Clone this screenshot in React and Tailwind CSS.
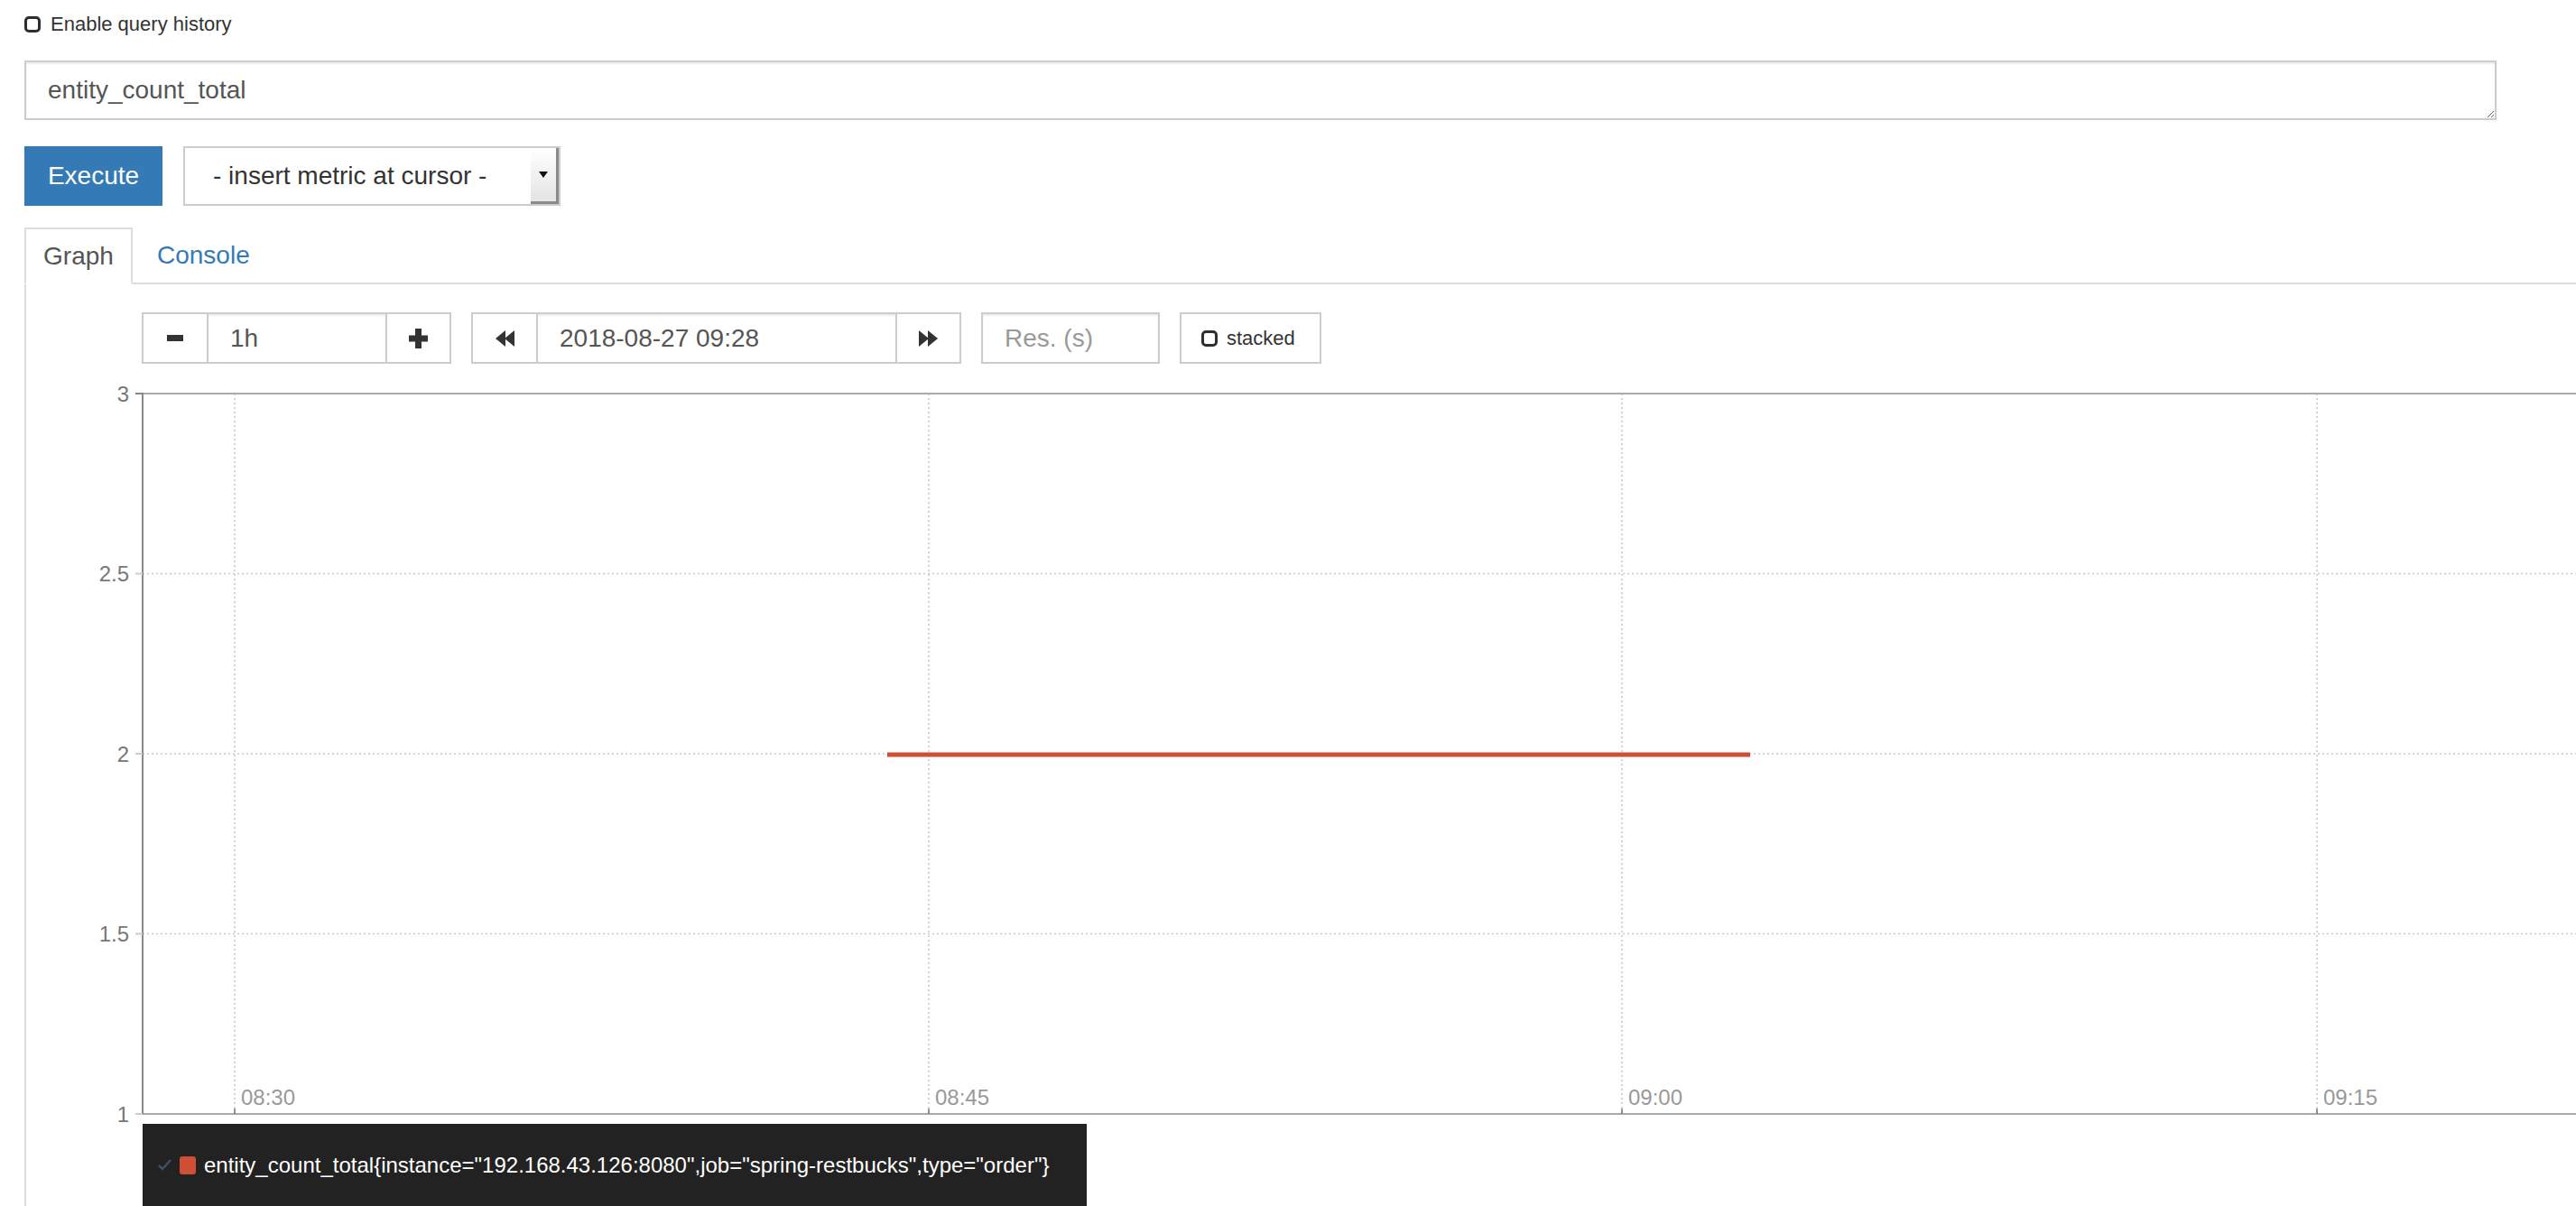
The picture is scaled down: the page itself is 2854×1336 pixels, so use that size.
import React from 'react';

const plotW = 2825;
const yOf = (v) => 16 + (3 - v) * 399;

const yTicks = [
  { v: 3, label: '3' },
  { v: 2.5, label: '2.5' },
  { v: 2, label: '2' },
  { v: 1.5, label: '1.5' },
  { v: 1, label: '1' },
];

const xTicks = [
  { x: 231, label: '08:30' },
  { x: 1000, label: '08:45' },
  { x: 1768, label: '09:00' },
  { x: 2538, label: '09:15' },
];

const Checkbox = ({ size = 18 }) => (
  <span
    className="inline-block shrink-0 rounded-[5px] border-[3px] border-[#2e2e2e] bg-white"
    style={{ width: size, height: size }}
  />
);

const MinusIcon = () => (
  <svg width="18" height="7" viewBox="0 0 18 7">
    <rect width="18" height="7" fill="#333" />
  </svg>
);

const PlusIcon = () => (
  <svg width="21" height="22" viewBox="0 0 21 22">
    <rect x="7" y="0" width="7" height="22" fill="#333" />
    <rect x="0" y="7.5" width="21" height="7" fill="#333" />
  </svg>
);

const BackwardIcon = () => (
  <svg width="21" height="18" viewBox="0 0 21 18">
    <polygon points="11,0 0,9 11,18" fill="#333" />
    <polygon points="21,0 10,9 21,18" fill="#333" />
  </svg>
);

const ForwardIcon = () => (
  <svg width="21" height="18" viewBox="0 0 21 18">
    <polygon points="0,0 11,9 0,18" fill="#333" />
    <polygon points="10,0 21,9 10,18" fill="#333" />
  </svg>
);

const Graph = () => (
  <svg width={plotW} height="832" className="mt-[17px] block">
    {/* grid */}
    {yTicks.slice(1, 4).map((t) => (
      <line key={t.v} x1="129" x2={plotW} y1={yOf(t.v)} y2={yOf(t.v)} stroke="#c8c8c8" strokeWidth="1.5" strokeDasharray="2 3" />
    ))}
    {xTicks.map((t) => (
      <line key={t.label} x1={t.x} x2={t.x} y1="16" y2="814" stroke="#c8c8c8" strokeWidth="1.5" strokeDasharray="2 3" />
    ))}
    <line x1="129" x2={plotW} y1="16" y2="16" stroke="#aaa" strokeWidth="2" />
    <line x1="129" x2={plotW} y1="814" y2="814" stroke="#aaa" strokeWidth="2" />
    <line x1="129" x2="129" y1="15" y2="815" stroke="#888" strokeWidth="2" />

    {/* y axis */}
    {yTicks.map((t) => (
      <g key={t.label}>
        <line x1="121" x2="129" y1={yOf(t.v)} y2={yOf(t.v)} stroke={t.v === 3 ? '#888' : '#ccc'} strokeWidth="2" />
        <text x="114" y={yOf(t.v) + 8.5} textAnchor="end" fontSize="24" fill="#777">
          {t.label}
        </text>
      </g>
    ))}

    {/* x axis */}
    {xTicks.map((t) => (
      <g key={t.label}>
        <line x1={t.x} x2={t.x} y1="808" y2="814" stroke="#777" strokeWidth="1.5" />
        <text x={t.x + 7} y="804" fontSize="24" fill="#999">
          {t.label}
        </text>
      </g>
    ))}

    {/* series */}
    <line x1="954" x2="1910" y1="416" y2="416" stroke="#cd4f36" strokeWidth="5" />
  </svg>
);

export default function App() {
  return (
    <div className="relative h-[1336px] w-[2854px] overflow-hidden bg-white font-['Liberation_Sans',Arial,sans-serif] text-[#333]">
      <div className="pl-[27px] pt-[18px]">
        {/* query history toggle */}
        <label className="flex h-[18px] items-center gap-[11px]">
          <Checkbox />
          <span className="text-[22px] leading-[26px]">Enable query history</span>
        </label>

        {/* expression */}
        <textarea
          rows={1}
          defaultValue="entity_count_total"
          className="mt-[31px] block h-[66px] w-[2739px] overflow-hidden border-2 border-[#ccc] pl-[24px] pt-[11px] text-[28px] leading-[40px] text-[#555] shadow-[inset_0_2px_2px_rgba(0,0,0,0.075)] outline-none"
        />

        <div className="mt-[29px] flex h-[66px] gap-[23px]">
          <button className="w-[153px] bg-[#337ab7] text-[28px] text-white">Execute</button>
          <div className="flex w-[418px] border-2 border-[#ccc] bg-white">
            <span className="flex flex-1 items-center pl-[31px] text-[28px] text-[#333]">- insert metric at cursor -</span>
            <span className="flex w-[31px] items-center justify-center border-b-[3px] border-r-[3px] border-b-[#8a8a8a] border-r-[#8a8a8a] bg-gradient-to-b from-white to-[#e4e4e4]">
              <svg width="10" height="7" viewBox="0 0 10 7">
                <polygon points="0,0 10,0 5,7" fill="#111" />
              </svg>
            </span>
          </div>
        </div>

        {/* tabs */}
        <div className="mt-[24px] flex border-b-2 border-[#ddd]">
          <div className="-mb-[2px] flex h-[63px] w-[120px] items-center justify-center border-2 border-[#ddd] border-b-white bg-white text-[28px] text-[#555]">
            Graph
          </div>
          <div className="ml-[4px] flex items-center px-[23px] text-[28px] text-[#337ab7]">Console</div>
        </div>

        <div className="border-l-2 border-[#ddd] pt-[31px]">
          {/* range controls */}
          <div className="ml-[128px] flex h-[57px]">
            <div className="flex">
              <button className="flex w-[74px] items-center justify-center border-2 border-[#ccc] bg-white">
                <MinusIcon />
              </button>
              <input
                readOnly
                defaultValue="1h"
                className="-ml-[2px] w-[200px] border-2 border-[#ccc] pl-[24px] text-[28px] text-[#555] shadow-[inset_0_2px_2px_rgba(0,0,0,0.075)] outline-none"
              />
              <button className="-ml-[2px] flex w-[73px] items-center justify-center border-2 border-[#ccc] bg-white">
                <PlusIcon />
              </button>
            </div>
            <div className="ml-[22px] flex">
              <button className="flex w-[74px] items-center justify-center border-2 border-[#ccc] bg-white">
                <BackwardIcon />
              </button>
              <input
                readOnly
                defaultValue="2018-08-27 09:28"
                className="-ml-[2px] w-[400px] border-2 border-[#ccc] pl-[24px] text-[28px] text-[#555] shadow-[inset_0_2px_2px_rgba(0,0,0,0.075)] outline-none"
              />
              <button className="-ml-[2px] flex w-[73px] items-center justify-center border-2 border-[#ccc] bg-white">
                <ForwardIcon />
              </button>
            </div>
            <input
              readOnly
              placeholder="Res. (s)"
              className="ml-[22px] w-[198px] border-2 border-[#ccc] pl-[24px] text-[28px] text-[#555] shadow-[inset_0_2px_2px_rgba(0,0,0,0.075)] outline-none placeholder:text-[#999]"
            />
            <button className="ml-[22px] flex w-[157px] items-center gap-[10px] border-2 border-[#ccc] bg-white pl-[22px] text-[22px] text-[#333]">
              <Checkbox />
              <span className="leading-[26px]">stacked</span>
            </button>
          </div>

          <Graph />

          {/* legend */}
          <div className="-mt-[7px] ml-[129px] flex h-[91px] w-[1046px] items-center bg-[#222] pl-[17px]">
            <svg width="15" height="13" viewBox="0 0 15 13">
              <polyline points="1,7 5,11 14,1" fill="none" stroke="#3f5266" strokeWidth="2.5" />
            </svg>
            <span className="ml-[9px] inline-block h-[20px] w-[18px] rounded-[3px] bg-[#cd4f36]" />
            <span className="ml-[9px] text-[24px] leading-[30px] text-white">
              entity_count_total{'{'}instance="192.168.43.126:8080",job="spring-restbucks",type="order"{'}'}
            </span>
          </div>
        </div>
      </div>
    </div>
  );
}
